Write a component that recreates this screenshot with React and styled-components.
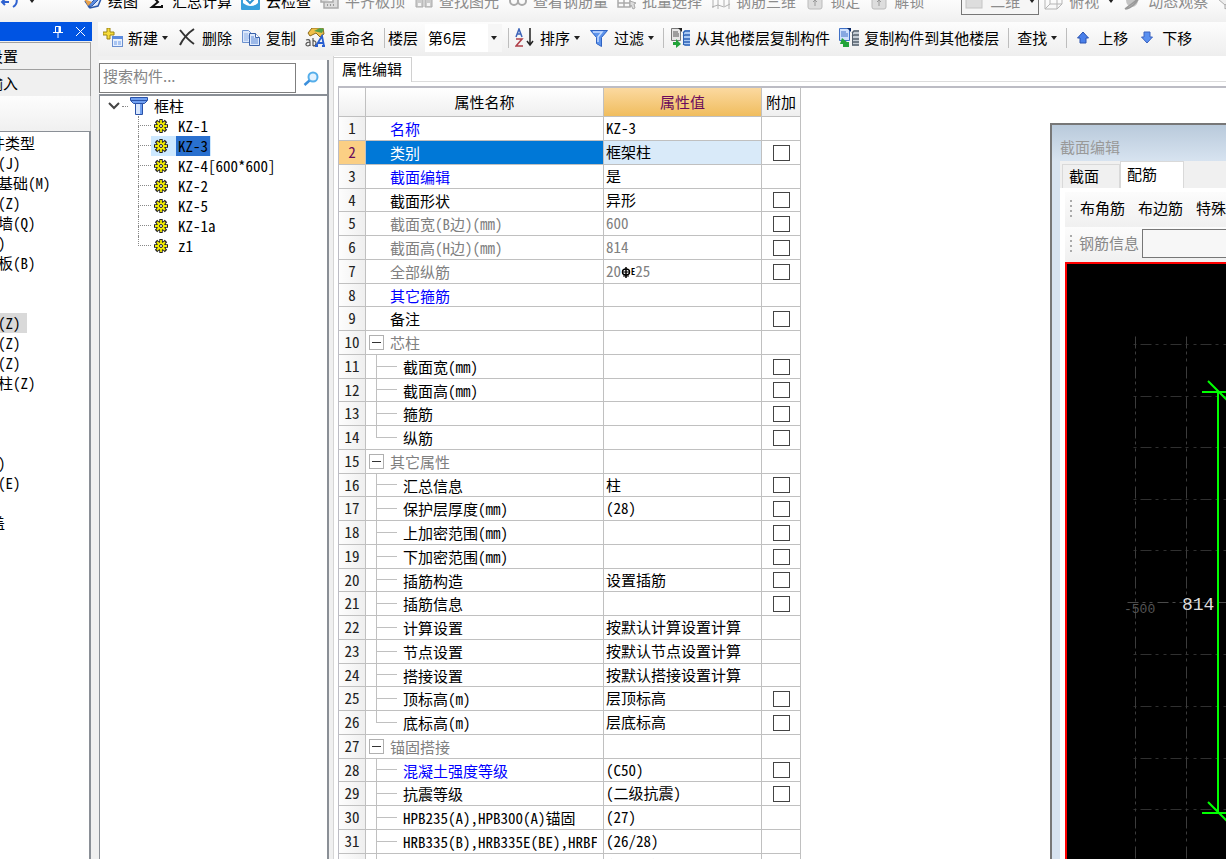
import React from 'react';
import styled, { createGlobalStyle, css } from 'styled-components';

const fonts = {
  ui: '"Noto Sans CJK SC", sans-serif',
  grid: '"Noto Sans Mono CJK SC", "Noto Sans CJK SC", monospace',
};

const colors = {
  face: '#f0f0f0',
  line: '#c0c0c0',
  darkLine: '#8a8f96',
  grey: '#808080',
  link: '#0000ff',
  select: '#0078d7',
  title: '#0054e3',
};

const GlobalStyle = createGlobalStyle`
  * { box-sizing: border-box; }
  body {
    margin: 0;
    background: ${colors.face};
    color: #000;
    font: 15px/20px ${fonts.ui};
  }
  button, input, select {
    margin: 0;
    padding: 0;
    border: 0;
    background: none;
    color: inherit;
    font: inherit;
  }
`;

const Page = styled.div`
  display: flex;
  flex-direction: column;
  height: 100vh;
  overflow: hidden;
`;

/* ---------- toolbars ---------- */

const Ribbon = styled.header`
  display: flex;
  align-items: flex-end;
  flex: none;
  height: 22px;
  overflow: hidden;
  background: linear-gradient(#fcfcfc, ${colors.face});
`;

const RibbonRow = styled.div`
  display: flex;
  align-items: center;
  gap: 9px;
  height: 42px;
`;

const QuickAccess = styled.div`
  display: flex;
  align-items: center;
  gap: 10px;
  width: 74px;
`;

const Toolbar = styled.div`
  display: flex;
  align-items: center;
  gap: 9px;
  flex: none;
  height: 34px;
  padding: 0 0 2px 5px;
  overflow: hidden;
  background: linear-gradient(#fdfdfd, #eee);
`;

const ToolButton = styled.button`
  display: flex;
  align-items: center;
  gap: 5px;
  flex: none;
  padding-left: ${({ $plain }) => ($plain ? '2px' : '0')};
  white-space: nowrap;
  color: ${({ $dim }) => ($dim ? '#8c8c8c' : '#000')};
  > svg {
    flex: none;
  }
`;

const Caret = styled.i`
  flex: none;
  width: 6px;
  border: solid transparent;
  border-width: 4px 3px 0;
  border-top-color: #222;
  margin-left: ${({ $wide }) => ($wide ? '4px' : '-1px')};
`;

const Separator = styled.i`
  flex: none;
  width: 1px;
  height: 20px;
  margin-right: -3px;
  background: #bdbdbd;
`;

const Field = styled.label`
  display: flex;
  align-items: center;
  gap: 7px;
  flex: none;
  margin: 0 -3px;
`;

const SelectBox = styled.span`
  display: grid;
  grid-template-columns: 63px 14px;
  align-items: center;
  height: 28px;
  background: linear-gradient(90deg, #fff 63px, #f6f6f6 63px);
  select {
    grid-area: 1 / 1 / 2 / 3;
    height: 28px;
    padding-left: 3px;
    appearance: none;
    outline: 0;
  }
  i {
    grid-area: 1 / 2;
    margin-left: 3px;
    pointer-events: none;
  }
`;

const ViewButton = styled(ToolButton)`
  height: 28px;
  margin: 0 -4px 0 28px;
  padding: 0 3px;
  border: 1px solid #777;
  background: #f6f6f6;
`;

/* ---------- left navigation ---------- */

const Body = styled.div`
  display: flex;
  flex: 1;
  min-height: 0;
`;

const Sidebar = styled.aside`
  display: flex;
  flex-direction: column;
  flex: none;
  width: 92px;
  overflow: hidden;
`;

const SidebarTitle = styled.div`
  display: flex;
  align-items: center;
  justify-content: flex-end;
  gap: 12px;
  flex: none;
  height: 19px;
  padding-right: 6px;
  margin-bottom: 1px;
  background: ${colors.title};
  button {
    display: flex;
  }
`;

const Scrolled = styled.div`
  display: flex;
  flex-direction: column;
  flex: 1;
  min-height: 0;
  margin: 0 1px 0 -55px;
`;

const SectionButton = styled.button`
  flex: none;
  height: 28px;
  padding-left: 13px;
  text-align: left;
  border: solid #a0a0a0;
  border-width: 1px 1px 1px 0;
  margin-bottom: -1px;
  background: ${colors.face};
`;

const SectionGap = styled.div`
  flex: none;
  height: 35px;
  border-right: 1px solid #ccc;
  background: linear-gradient(#fdfdfd, ${colors.face});
`;

const NavList = styled.ul`
  flex: 1;
  margin: 0;
  padding: 1px 0 0;
  list-style: none;
  border: solid ${colors.darkLine};
  border-width: 1px 2px 0 0;
  background: #fff;
  font-family: ${fonts.grid};
`;

const NavItem = styled.li`
  display: flex;
  height: 20px;
  padding-left: ${({ $child }) => ($child ? '23px' : '0')};
  span {
    padding-right: 6px;
    background: ${({ $active }) => ($active ? '#d9d9d9' : 'none')};
  }
`;

/* ---------- component tree ---------- */

const Main = styled.main`
  display: flex;
  flex-direction: column;
  flex: 1;
  min-width: 0;
  margin-left: 6px;
`;

const Content = styled.div`
  display: flex;
  flex: 1;
  min-height: 0;
`;

const TreePanel = styled.section`
  display: flex;
  flex-direction: column;
  flex: none;
  width: 230px;
  margin: 4px 4px 0 1px;
  border-right: 2px solid ${colors.darkLine};
  background: #fff;
`;

const SearchBar = styled.div`
  display: flex;
  flex: none;
  height: 34px;
  padding: 3px 0 1px;
  input {
    width: 197px;
    height: 30px;
    padding: 0 3px 5px;
    border: 1px solid #7f7f7f;
    outline: 0;
  }
  input::placeholder {
    color: #858585;
  }
  button {
    display: flex;
    align-items: center;
    justify-content: center;
    flex: 1;
  }
`;

const Tree = styled.div`
  flex: 1;
  border: solid ${colors.darkLine};
  border-width: 2px 0 0 1px;
  font-family: ${fonts.grid};
`;

const TreeRoot = styled.div`
  display: flex;
  align-items: center;
  height: 20px;
  padding-left: 8px;
  span {
    margin-left: 6px;
  }
`;

const RootDots = styled.i`
  width: 6px;
  margin: 0 2px;
  border-top: 1px dotted #888;
`;

const TreeRow = styled.div`
  display: flex;
  height: 20px;
  padding-left: 38px;
`;

const Guide = styled.i`
  display: grid;
  grid-template-rows: 1fr 1fr;
  flex: none;
  width: ${({ $solid }) => ($solid ? '21px' : '13px')};
  color: ${({ $solid }) => ($solid ? '#c0c0c0' : '#888')};
  &::before,
  &::after {
    content: '';
    border: 0 ${({ $solid }) => ($solid ? 'solid' : 'dotted')};
    border-left-width: 1px;
  }
  &::before {
    border-bottom-width: 1px;
  }
  ${({ $last }) => $last && css`
    &::after {
      border-left-width: 0;
    }
  `}
`;

const TreeItem = styled.button`
  display: flex;
  align-items: center;
  gap: 8px;
  padding: 0 1px 0 3px;
  font-family: ${fonts.grid};
  background: ${({ $active }) => ($active ? '#cce8ff' : 'none')};
  span {
    padding: 0 2px;
    background: ${({ $active }) => ($active ? '#2970cf' : 'none')};
  }
`;

/* ---------- property sheet ---------- */

const Properties = styled.section`
  display: flex;
  flex-direction: column;
  flex: 1;
  min-width: 0;
  border-left: 1px solid #d5d5d5;
  background: #fff;
`;

const TabBar = styled.div`
  display: flex;
  flex: none;
  height: 26px;
  margin-bottom: 4px;
  &::after {
    content: '';
    flex: 1;
    border-bottom: 1px solid #dcdcdc;
  }
`;

const Tab = styled.button`
  padding: 0 9px 3px 8px;
  margin-top: 1px;
  border: solid #d0d0d0;
  border-width: 1px 1px 0 0;
`;

const Workspace = styled.div`
  display: flex;
  align-items: flex-start;
  flex: 1;
  min-height: 0;
  margin-left: 4px;
  overflow: hidden;
  border: solid #bcbcc4;
  border-width: 2px 0 0 1px;
`;

const Sheet = styled.table`
  flex: none;
  width: 462px;
  table-layout: fixed;
  border-spacing: 0;
  font-family: ${fonts.grid};
  th,
  td {
    padding: 0;
    border: solid ${colors.line};
    border-width: 0 1px 1px 0;
    font-weight: normal;
    white-space: nowrap;
    overflow: hidden;
  }
  thead th {
    height: 29px;
    background: linear-gradient(#fff, #efefef);
  }
`;

const ValueHead = styled.th`
  && {
    color: #6b0a5c;
    background: linear-gradient(#fbd9a0, #f0bd5e);
  }
`;

const Row = styled.tr`
  --row: 23px;
  height: 24px;
  &:nth-child(4n) {
    --row: 22px;
    height: 23px;
  }
`;

const RowNumber = styled.th`
  line-height: 22px;
  vertical-align: top;
  color: ${({ $active }) => ($active ? '#6b0a5c' : '#222')};
  background: ${({ $active }) => ($active ? '#fbcf84' : 'linear-gradient(90deg, #fdfdfd, #efefef)')};
`;

const tones = {
  link: colors.link,
  dim: colors.grey,
  group: colors.grey,
};

const Name = styled.div`
  display: flex;
  height: var(--row);
  margin-right: 6px;
  padding-left: ${({ $kind }) => ({ child: '10px', group: '3px' }[$kind] || '24px')};
  line-height: 24px;
  overflow: hidden;
  color: ${({ $tone }) => tones[$tone] || '#000'};
  > span {
    margin-left: ${({ $kind }) => ($kind ? '6px' : '0')};
  }
`;

const NameCell = styled.td`
  background: ${({ $active }) => ($active ? colors.select : '#fff')};
  ${({ $active }) => $active && css`
    ${Name} {
      color: #fff;
    }
  `}
`;

const Toggle = styled.button`
  align-self: center;
  flex: none;
  width: 15px;
  height: 15px;
  border: 1px solid #b0b0b0;
  background: linear-gradient(#333, #333) center / 9px 1px no-repeat;
`;

const ValueCell = styled.td`
  line-height: 22px;
  vertical-align: top;
  && {
    padding-left: 2px;
  }
  color: ${({ $tone }) => ($tone === 'dim' ? colors.grey : '#000')};
  background: ${({ $active }) => ($active ? '#d9eaf9' : '#fff')};
`;

const ExtraCell = styled.td`
  line-height: 0;
  text-align: center;
  input {
    width: 17px;
    height: 16px;
    border: 1px solid #444;
    background: #fff;
    appearance: none;
    vertical-align: middle;
  }
  input:checked {
    background: ${colors.select};
  }
`;

const Rebar = styled.span`
  display: inline-flex;
  align-items: center;
  height: 12px;
  color: #000;
  font-size: 10px;
  font-weight: bold;
  line-height: 12px;
  vertical-align: -1px;
  sup {
    align-self: flex-start;
    line-height: 8px;
  }
`;

/* ---------- section editor ---------- */

const Editor = styled.section`
  display: flex;
  flex-direction: column;
  align-self: stretch;
  flex: 1;
  min-width: 0;
  margin: 35px 0 0 249px;
  padding-left: 8px;
  border: solid #777;
  border-width: 2px 0 0 2px;
  background: #d7e3f0;
`;

const EditorTitle = styled.h2`
  margin: 0 0 0 -8px;
  padding: 12px 0 4px 8px;
  background: linear-gradient(#b9cadb, #d7e3f0);
  color: #999;
  font-size: 15px;
  font-weight: normal;
  line-height: 20px;
`;

const EditorPanel = styled.div`
  display: flex;
  flex-direction: column;
  flex: 1;
  min-height: 0;
  padding-left: 5px;
  background: #fff;
`;

const EditorTabs = styled.div`
  display: flex;
  align-items: flex-end;
  flex: none;
  height: 27px;
  margin: 0 0 4px -5px;
  padding-left: 2px;
  background: ${colors.face};
`;

const EditorTab = styled.button`
  height: ${({ $active }) => ($active ? '27px' : '24px')};
  width: ${({ $active }) => ($active ? '64px' : '58px')};
  padding: 0 0 ${({ $active }) => ($active ? '3px' : '2px')} 6px;
  text-align: left;
  border: 1px solid #d9d9d9;
  border-bottom: 0;
  background: ${({ $active }) => ($active ? '#fff' : colors.face)};
`;

const EditorTools = styled.div`
  display: flex;
  align-items: center;
  gap: ${({ $gap }) => $gap};
  flex: none;
  height: 35px;
  padding: 0 0 3px 5px;
  overflow: hidden;
  white-space: nowrap;
  background: linear-gradient(#fcfcfc, ${colors.face});
  color: ${({ $dim }) => ($dim ? '#888' : '#000')};
  button {
    flex: none;
  }
  input {
    flex: 1 0 120px;
    height: 29px;
    margin-left: 3px;
    border: 1px solid #777;
    background: #f7f7f7;
  }
`;

const Grip = styled.i`
  flex: none;
  width: 2px;
  height: 17px;
  margin-right: ${({ $space }) => $space};
  background: repeating-linear-gradient(#aaa 0 2px, transparent 2px 5px);
`;

const Canvas = styled.div`
  flex: 1;
  min-height: 0;
  border: solid #f00;
  border-width: 2px 0 0 2px;
  background: #000;
  svg {
    display: block;
  }
`;

/* ---------- icons ---------- */

const Svg = ({ children, size = 20 }) => (
  <svg width={size} height={size} viewBox="0 0 20 20" fill="none" aria-hidden="true">{children}</svg>
);

const icons = {
  undo: (
    <Svg><path d="M2 11h7M5 8l-3 3 3 3M13 4c5 3 5 9 0 12" stroke="#2f62d0" strokeWidth="2" /></Svg>
  ),
  draw: (
    <Svg>
      <path d="M2 10l5 7 8-2 3-7" fill="#dfe9fa" stroke="#2b57a8" strokeWidth="1.5" />
      <path d="M17 3L7 13l-2 3 4-1 9-9z" fill="#5b8be0" stroke="#2b57a8" />
      <path d="M1 8l8 3-4 4z" fill="#e8a24a" />
    </Svg>
  ),
  sigma: <Svg><path d="M15 5H5l6 6-6 5h10v-2" stroke="#111" strokeWidth="2" /></Svg>,
  cloud: (
    <Svg>
      <rect x="0" y="0" width="19" height="19" rx="1" fill="#37a0dc" />
      <path d="M2 2h15v10c-5 4-10 4-15 0z" fill="#fff" />
      <path d="M5 8l4 4 6-6" stroke="#2f93d0" strokeWidth="2" />
    </Svg>
  ),
  slab: (
    <Svg>
      <path d="M1 4h12v7H1zM4 11v6h14v-9h-5" fill="#ddd" stroke="#aaa" strokeWidth="1.5" />
      <path d="M7 14h1M10 14h1M13 14h1" stroke="#999" strokeWidth="2" />
    </Svg>
  ),
  binocular: (
    <Svg>
      <path d="M2 16V9l2-6h3l2 6v7zM11 16V9l2-6h3l2 6v7z" fill="#ccc" stroke="#aaa" />
      <path d="M4 12h3v3H4zM13 12h3v3h-3z" fill="#f4f4f4" />
    </Svg>
  ),
  glasses: (
    <Svg><circle cx="6" cy="10" r="4" stroke="#aaa" strokeWidth="2" /><circle cx="14" cy="10" r="4" stroke="#aaa" strokeWidth="2" /></Svg>
  ),
  batch: (
    <Svg>
      <path d="M1 8h6v8H1zM7 8h6v8H7zM1 12h12" stroke="#aaa" strokeWidth="1.5" />
      <path d="M13 10l6 2-2 1 1 4-2 1-2-4-1 2z" fill="#ddd" stroke="#aaa" />
    </Svg>
  ),
  frame3d: <Svg><path d="M2 2v15M7 4v14M13 2v13M18 4v14M1 6h17M1 16l6-2 6 2 6-3" stroke="#b0b0b0" /></Svg>,
  lock: (
    <Svg>
      <rect x="3" y="6" width="14" height="12" rx="2" fill="#ddd" stroke="#bbb" />
      <path d="M10 9v6M8 11l2-2 2 2" stroke="#999" />
    </Svg>
  ),
  plane: <Svg><rect x="1" y="4" width="16" height="13" fill="#ddd" stroke="#c4c4c4" /></Svg>,
  cube: (
    <Svg><path d="M1 7h12v11H1zM1 7l5-5h12v11l-5 5M13 7l5-5M6 2v11L1 18M6 13h12" stroke="#b5b5b5" /></Svg>
  ),
  orbit: (
    <Svg>
      <ellipse cx="9" cy="9" rx="6" ry="7" fill="#c4c4c4" />
      <path d="M2 18c2-2 11-7 15-13M2 18c5 0 12-6 15-13" stroke="#999" strokeWidth="1.5" />
    </Svg>
  ),
  pan: <Svg><path d="M1 8l7-5 8 5-8 6zM8 14v4l8-6V8" fill="#eee" stroke="#aaa" /></Svg>,
  create: (
    <Svg>
      <path d="M4 0h3v4h4v3H7v4H4V7H0V4h4z" fill="#f7dc3a" stroke="#9c8411" />
      <rect x="9.500" y="8.500" width="10" height="10" fill="#e8f0fd" stroke="#6a8fd0" />
      <path d="M9 8h11v3H9z" fill="#5b8adf" />
      <path d="M11 14h3M15 14h3M11 16h3M15 16h3" stroke="#6a9ae8" />
    </Svg>
  ),
  remove: (
    <Svg>
      <path d="M3 2c4 5 8 10 14 14" stroke="#333" strokeWidth="2" />
      <path d="M17 1C11 5 6 11 3 17" stroke="#333" strokeWidth="2" />
    </Svg>
  ),
  copy: (
    <Svg>
      <path d="M1.500 2.500h6l3 3v9h-9z" fill="#dce8fb" stroke="#6d92cf" />
      <path d="M3 6h4M3 8h5M3 10h5M3 12h4" stroke="#8fb0e6" />
      <path d="M8.500 5.500h6l4 4v8h-10z" fill="#dfeafc" stroke="#3a62aa" />
      <path d="M14.500 5.500v4h4" fill="#fff" stroke="#3a62aa" />
      <path d="M10 9h3M10 11h7M10 13h7M10 15h7" stroke="#5b88d4" />
    </Svg>
  ),
  rename: (
    <Svg>
      <path d="M3 5l4-5h11l1 6-4 3-4-4-6 3z" fill="#f0c04a" stroke="#8a6a1c" />
      <path d="M9 3l6-3 4 1-2 4z" fill="#55a04a" />
      <path d="M1 12c3-1 4 0 4 2v4M5 14c-5 0-5 4-2 4l2-1M8 10v8M8 13c4-1 4 5 0 5" stroke="#555" strokeWidth="1.200" />
      <path d="M11 18l6-10 2 10M13 15h5M10 18h3M17 18h3" stroke="#2a5fd0" strokeWidth="1.800" />
    </Svg>
  ),
  sort: (
    <Svg>
      <path d="M1 9l3-8 3 8M2 6h4" stroke="#3a62b8" strokeWidth="1.500" />
      <path d="M1 11h6l-6 7h7" stroke="#b0404a" strokeWidth="1.600" />
      <path d="M15 0v17M12 13l3 4 3-4" stroke="#222" strokeWidth="1.500" />
    </Svg>
  ),
  filter: (
    <Svg>
      <path d="M1.500 2.500h17l-6 7v9l-5-3v-6z" fill="#5c93ec" stroke="#2e62c2" />
      <path d="M4 4h9l-4 5v5" stroke="#c5dcff" strokeWidth="1.500" />
    </Svg>
  ),
  copyFrom: (
    <Svg>
      <path d="M1.500.500h9v12h-9z" fill="#e6e6e6" stroke="#777" />
      <path d="M8 0h4v4z" fill="#222" />
      <path d="M3 4h5M3 6h6M3 8h6" stroke="#555" />
      <path d="M3 14h3v-3l5 5-5 4v-3H3z" fill="#22a33a" />
      <path d="M13 4l2-2h5v16h-4l-3-2z" fill="#a9c9f4" />
      <path d="M13 5l2-2h5M13 8l2-1h5M13 11h7M13 14h7M13 16l2 1h5" stroke="#2c62b5" strokeWidth="1.300" />
      <path d="M13.500 4v13" stroke="#2c62b5" />
    </Svg>
  ),
  copyTo: (
    <Svg>
      <path d="M.500.500h10v12h-10z" fill="#cfe0fc" stroke="#3f70c6" />
      <path d="M8 0h4v4z" fill="#0d2a66" />
      <path d="M2 4h5M2 6h7M2 8h7" stroke="#3f70c6" />
      <path d="M3 10l5 4h2v5H4v-3H1z" fill="#22a33a" />
      <path d="M13 4l2-2h5v16h-7z" fill="#c6ced6" />
      <path d="M13 5l2-2h5M13 8l2-1h5M13 11h7M13 14h7M13 17h7" stroke="#56616e" strokeWidth="1.300" />
      <path d="M13.500 4v13" stroke="#56616e" />
    </Svg>
  ),
  up: <Svg><path d="M10 4l5.500 6H13v5H7v-5H4.500z" fill="#4a80ea" stroke="#2a52b0" /></Svg>,
  down: <Svg><path d="M10 15l5.500-6H13V4H7v5H4.500z" fill="#5a90f0" stroke="#3a62c0" /></Svg>,
};

const PinIcon = () => (
  <svg width="10" height="12" viewBox="0 0 10 12" fill="none" stroke="#fff" aria-hidden="true">
    <path d="M2.500 6.500v-6h5v6M0 6.500h10M5 7v5" />
    <path d="M6.500 1v5" strokeWidth="2" />
  </svg>
);

const CloseIcon = () => (
  <svg width="11" height="11" viewBox="0 0 11 11" stroke="#fff" aria-hidden="true">
    <path d="M1 1l9 9M10 1l-9 9" />
  </svg>
);

const SearchIcon = () => (
  <svg width="17" height="17" viewBox="0 0 17 17" fill="none" aria-hidden="true">
    <circle cx="10" cy="7" r="4.500" fill="#e2f2ff" stroke="#55aeea" strokeWidth="2" />
    <path d="M6.500 10.500L1.500 15" stroke="#3b8fdc" strokeWidth="2.500" />
  </svg>
);

const ChevronIcon = () => (
  <svg width="12" height="8" viewBox="0 0 12 8" fill="none" stroke="#444" strokeWidth="2" aria-hidden="true">
    <path d="M1 1l5 5 5-5" />
  </svg>
);

const ColumnIcon = () => (
  <svg width="18" height="20" viewBox="0 0 18 20" aria-hidden="true">
    <path d="M.500 1.500h17v3l-3 3h-11l-3-3z" fill="#6f9ff0" stroke="#2a52a8" />
    <path d="M1 4.500h16" stroke="#2a52a8" />
    <path d="M5.500 7.500h7v11h-7z" fill="#d9e7fd" stroke="#2a52a8" />
    <path d="M11 8v10" stroke="#6f9ff0" strokeWidth="2" />
  </svg>
);

const GearIcon = () => (
  <svg width="14" height="14" viewBox="0 0 14 14" fill="none" aria-hidden="true">
    <path d="M7 0v14M0 7h14M2 2l10 10M12 2L2 12" stroke="#222" strokeWidth="3.400" />
    <circle cx="7" cy="7" r="5" fill="#222" />
    <path d="M7 1v12M1 7h12M3 3l8 8M11 3l-8 8" stroke="#f4ec00" strokeWidth="1.800" />
    <circle cx="7" cy="7" r="3.600" fill="#f4ec00" />
    <circle cx="7" cy="7" r="1.500" fill="#fff" stroke="#222" />
  </svg>
);

const RebarIcon = () => (
  <svg width="10" height="11" viewBox="0 0 10 11" fill="none" stroke="#000" aria-hidden="true">
    <ellipse cx="5" cy="5" rx="3.500" ry="3" strokeWidth="1.500" />
    <path d="M5 0v11" strokeWidth="1.500" />
    <path d="M1 5h8M2 9h6" />
  </svg>
);

/* ---------- data ---------- */

const ribbonTools = [
  { icon: 'draw', text: '绘图' },
  { icon: 'sigma', text: '汇总计算' },
  { icon: 'cloud', text: '云检查' },
  { icon: 'slab', text: '平齐板顶', dim: true },
  { icon: 'binocular', text: '查找图元', dim: true },
  { icon: 'glasses', text: '查看钢筋量', dim: true },
  { icon: 'batch', text: '批量选择', dim: true },
  { icon: 'frame3d', text: '钢筋三维', dim: true },
  { icon: 'lock', text: '锁定', dim: true },
  { icon: 'lock', text: '解锁', dim: true },
];

const navItems = [
  { text: '常用构件类型' },
  { text: '轴网(J)', child: true },
  { text: '筏板基础(M)', child: true },
  { text: '框柱(Z)', child: true },
  { text: '剪力墙(Q)', child: true },
  { text: '梁(L)', child: true },
  { text: '现浇板(B)', child: true },
  { text: '轴线' },
  { text: '柱' },
  { text: '框柱(Z)', child: true, active: true },
  { text: '暗柱(Z)', child: true },
  { text: '端柱(Z)', child: true },
  { text: '构造柱(Z)', child: true },
  { text: '墙' },
  { text: '门窗' },
  { text: '梁' },
  { text: '梁(L)', child: true },
  { text: '圈梁(E)', child: true },
  { text: '板' },
  { text: '空心楼盖' },
];

const components = ['KZ-1', 'KZ-3', 'KZ-4[600*600]', 'KZ-2', 'KZ-5', 'KZ-1a', 'z1'];

const properties = [
  { name: '名称', value: 'KZ-3', tone: 'link' },
  { name: '类别', value: '框架柱', extra: true, active: true },
  { name: '截面编辑', value: '是', tone: 'link' },
  { name: '截面形状', value: '异形', extra: true },
  { name: '截面宽(B边)(mm)', value: '600', tone: 'dim', extra: true },
  { name: '截面高(H边)(mm)', value: '814', tone: 'dim', extra: true },
  { name: '全部纵筋', value: <>20<Rebar><RebarIcon /><sup>E</sup></Rebar>25</>, tone: 'dim', extra: true },
  { name: '其它箍筋', tone: 'link' },
  { name: '备注', extra: true },
  { name: '芯柱', kind: 'group' },
  { name: '截面宽(mm)', kind: 'child', extra: true },
  { name: '截面高(mm)', kind: 'child', extra: true },
  { name: '箍筋', kind: 'child', extra: true },
  { name: '纵筋', kind: 'child', extra: true, last: true },
  { name: '其它属性', kind: 'group' },
  { name: '汇总信息', value: '柱', kind: 'child', extra: true },
  { name: '保护层厚度(mm)', value: '(28)', kind: 'child', extra: true },
  { name: '上加密范围(mm)', kind: 'child', extra: true },
  { name: '下加密范围(mm)', kind: 'child', extra: true },
  { name: '插筋构造', value: '设置插筋', kind: 'child', extra: true },
  { name: '插筋信息', kind: 'child', extra: true },
  { name: '计算设置', value: '按默认计算设置计算', kind: 'child' },
  { name: '节点设置', value: '按默认节点设置计算', kind: 'child' },
  { name: '搭接设置', value: '按默认搭接设置计算', kind: 'child' },
  { name: '顶标高(m)', value: '层顶标高', kind: 'child', extra: true },
  { name: '底标高(m)', value: '层底标高', kind: 'child', extra: true, last: true },
  { name: '锚固搭接', kind: 'group' },
  { name: '混凝土强度等级', value: '(C50)', kind: 'child', tone: 'link', extra: true },
  { name: '抗震等级', value: '(二级抗震)', kind: 'child', extra: true },
  { name: 'HPB235(A),HPB300(A)锚固', value: '(27)', kind: 'child' },
  { name: 'HRB335(B),HRB335E(BE),HRBF', value: '(26/28)', kind: 'child' },
  { name: 'HRB400(C),HRB400E(CE),HRBF', value: '(32/35)', kind: 'child' },
];

/* ---------- components ---------- */

const Tool = ({ icon, text, dim, caret, wide }) => (
  <ToolButton type="button" $dim={dim} $plain={!icon}>
    {icon && icons[icon]}
    <span>{text}</span>
    {caret && <Caret $wide={wide} />}
  </ToolButton>
);

const PropertyRow = ({ item, index }) => {
  const { name, value, kind, tone, extra, active, last } = item;
  return (
    <Row>
      <RowNumber scope="row" $active={active}>{index + 1}</RowNumber>
      <NameCell $active={active}>
        <Name $kind={kind} $tone={tone || kind}>
          {kind === 'group' && <Toggle type="button" aria-label={`折叠${name}`} />}
          {kind === 'child' && <Guide $solid $last={last} />}
          <span>{name}</span>
        </Name>
      </NameCell>
      <ValueCell $active={active} $tone={tone}>{value}</ValueCell>
      <ExtraCell>{extra && <input type="checkbox" aria-label={`附加 ${name}`} />}</ExtraCell>
    </Row>
  );
};

const gridRows = [80, 132, 183, 235, 286, 390, 442, 494, 545];

const SectionDrawing = () => (
  <svg width="100%" height="100%" aria-label="截面图">
    <g stroke="#303030" strokeWidth="1" fill="none" transform="translate(.5 .5)">
      {gridRows.map(y => (
        <path key={y} d={`M66 ${y}H1200`} strokeDasharray="3 4 11 4 3 5" />
      ))}
      {[68, 119, 171, 223].map(x => (
        <path key={x} d={`M${x} 72V900`} stroke="#3c3c3c" strokeDasharray="12 3 3 4 3 5" />
      ))}
      <path d="M60 338H1200" stroke="#4a4a4a" strokeDasharray="11 4 3 4 3 5" />
    </g>
    <g stroke="#00ff00" strokeWidth="2">
      <path d="M151 127V549M135 128H1200M135 549H1200" />
      <path d="M141 117l22 22M141 538l22 22" />
    </g>
    <text x="57" y="349" fill="#555" fontFamily="Liberation Mono, monospace" fontSize="13">-500</text>
    <text x="115" y="346" fill="#dcdcdc" fontFamily="Liberation Mono, monospace" fontSize="18">814</text>
  </svg>
);

const App = () => (
  <Page>
    <GlobalStyle />
    <Ribbon>
      <RibbonRow>
        <QuickAccess>
          <ToolButton type="button" aria-label="撤销">{icons.undo}</ToolButton>
          <Caret />
        </QuickAccess>
        {ribbonTools.map(tool => <Tool key={tool.text} {...tool} />)}
        <ViewButton type="button" $dim>
          {icons.plane}
          <span>二维</span>
          <Caret $wide />
        </ViewButton>
        <Tool icon="cube" text="俯视" dim caret wide />
        <Tool icon="orbit" text="动态观察" dim />
        {icons.pan}
      </RibbonRow>
    </Ribbon>
    <Body>
      <Sidebar>
        <SidebarTitle>
          <button type="button" aria-label="固定"><PinIcon /></button>
          <button type="button" aria-label="关闭"><CloseIcon /></button>
        </SidebarTitle>
        <Scrolled>
          <SectionButton type="button">工程设置</SectionButton>
          <SectionButton type="button">绘图输入</SectionButton>
          <SectionGap />
          <NavList>
            {navItems.map(({ text, child, active }, key) => (
              <NavItem key={key} $child={child} $active={active}><span>{text}</span></NavItem>
            ))}
          </NavList>
        </Scrolled>
      </Sidebar>
      <Main>
        <Toolbar>
          <Tool icon="create" text="新建" caret />
          <Tool icon="remove" text="删除" />
          <Tool icon="copy" text="复制" />
          <Tool icon="rename" text="重命名" />
          <Separator />
          <Field>
            楼层
            <SelectBox>
              <select defaultValue="6">
                <option value="6">第6层</option>
              </select>
              <Caret />
            </SelectBox>
          </Field>
          <Separator />
          <Tool icon="sort" text="排序" caret />
          <Tool icon="filter" text="过滤" caret />
          <Separator />
          <Tool icon="copyFrom" text="从其他楼层复制构件" />
          <Tool icon="copyTo" text="复制构件到其他楼层" />
          <Separator />
          <Tool text="查找" caret />
          <Separator />
          <Tool icon="up" text="上移" />
          <Tool icon="down" text="下移" />
        </Toolbar>
        <Content>
          <TreePanel>
            <SearchBar>
              <input type="text" placeholder="搜索构件..." aria-label="搜索构件" />
              <button type="button" aria-label="搜索"><SearchIcon /></button>
            </SearchBar>
            <Tree>
              <TreeRoot>
                <ChevronIcon />
                <RootDots />
                <ColumnIcon />
                <span>框柱</span>
              </TreeRoot>
              {components.map((name, key) => (
                <TreeRow key={name}>
                  <Guide $last={key === components.length - 1} />
                  <TreeItem type="button" $active={name === 'KZ-3'}>
                    <GearIcon />
                    <span>{name}</span>
                  </TreeItem>
                </TreeRow>
              ))}
            </Tree>
          </TreePanel>
          <Properties>
            <TabBar>
              <Tab type="button">属性编辑</Tab>
            </TabBar>
            <Workspace>
              <Sheet>
                <colgroup>
                  <col width="27" />
                  <col width="238" />
                  <col width="158" />
                  <col width="39" />
                </colgroup>
                <thead>
                  <tr>
                    <th aria-label="序号" />
                    <th>属性名称</th>
                    <ValueHead>属性值</ValueHead>
                    <th>附加</th>
                  </tr>
                </thead>
                <tbody>
                  {properties.map((item, index) => (
                    <PropertyRow key={index} item={item} index={index} />
                  ))}
                </tbody>
              </Sheet>
              <Editor>
                <EditorTitle>截面编辑</EditorTitle>
                <EditorPanel>
                  <EditorTabs>
                    <EditorTab type="button">截面</EditorTab>
                    <EditorTab type="button" $active>配筋</EditorTab>
                  </EditorTabs>
                  <EditorTools $gap="13px">
                    <Grip $space="-5px" />
                    <button type="button">布角筋</button>
                    <button type="button">布边筋</button>
                    <button type="button">特殊布筋</button>
                  </EditorTools>
                  <EditorTools $gap="0" $dim>
                    <Grip $space="7px" />
                    <label htmlFor="rebar">钢筋信息</label>
                    <input id="rebar" type="text" />
                  </EditorTools>
                  <Canvas><SectionDrawing /></Canvas>
                </EditorPanel>
              </Editor>
            </Workspace>
          </Properties>
        </Content>
      </Main>
    </Body>
  </Page>
);

export default App;
